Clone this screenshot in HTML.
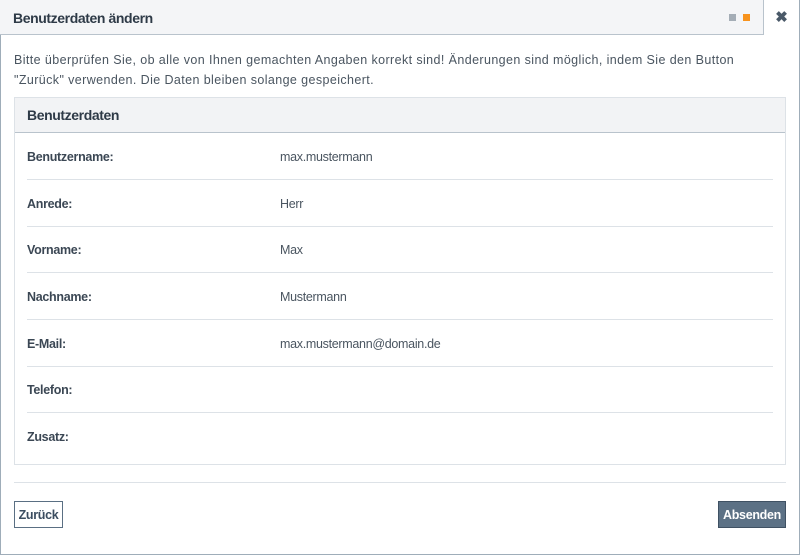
<!DOCTYPE html>
<html><head><meta charset="utf-8"><style>
*{margin:0;padding:0;box-sizing:border-box}
body{width:800px;height:555px;background:#fff;font-family:"Liberation Sans",sans-serif;color:#3b4754;overflow:hidden}
.frame{position:absolute;left:0;top:0;width:800px;height:555px;border:1px solid #9fadb9}
.hdr{position:absolute;left:0;top:0;width:798px;height:35px;background:#f4f5f7;border-bottom:1px solid #b9c3cc}
.hdr h1{position:absolute;left:13px;top:10px;font-size:14px;font-weight:bold;color:#2e3a47;letter-spacing:-0.4px}
.sq{position:absolute;top:14px;width:7px;height:7px}
.close{position:absolute;left:763px;top:0;width:36px;height:35px;border-left:1px solid #b9c3cc;background:#fff;font-size:15px;font-weight:bold;text-align:center;line-height:35px;color:#4a5968}
.intro{position:absolute;left:14px;top:50px;font-size:12.5px;line-height:20px;color:#4a5560;letter-spacing:0.4px;width:790px;white-space:nowrap}
.panel{position:absolute;left:14px;top:97px;width:772px;height:368px;border:1px solid #dde2e7}
.ph{height:35px;background:#f2f3f5;border-bottom:1px solid #b9c3cc;font-weight:bold;font-size:14px;padding:9px 12px;color:#2e3a47;letter-spacing:-0.4px}
.row{position:absolute;left:12px;width:746px;height:47px;border-bottom:1px solid #dde2e7;font-size:12.5px;letter-spacing:-0.3px}
.row b{position:absolute;left:0;top:17px;color:#3b4754}
.row span{position:absolute;left:253px;top:17px;color:#4a5560}
.fl{position:absolute;left:14px;top:482px;width:772px;border-top:1px solid #dde2e7}
.btn{position:absolute;top:501px;height:27px;font-size:12.5px;font-weight:bold;line-height:26px;text-align:center;letter-spacing:-0.3px}
</style></head><body>
<div class="frame"></div>
<div class="hdr"><h1>Benutzerdaten ändern</h1>
<div class="sq" style="left:729px;background:#a4adb6"></div>
<div class="sq" style="left:743px;background:#f7931e"></div>
<div class="close">✖</div></div>
<div class="intro">Bitte überprüfen Sie, ob alle von Ihnen gemachten Angaben korrekt sind! Änderungen sind möglich, indem Sie den Button<br>"Zurück" verwenden. Die Daten bleiben solange gespeichert.</div>
<div class="panel"><div class="ph">Benutzerdaten</div>
<div class="row" style="top:35px"><b>Benutzername:</b><span>max.mustermann</span></div>
<div class="row" style="top:82px"><b>Anrede:</b><span>Herr</span></div>
<div class="row" style="top:128px"><b>Vorname:</b><span>Max</span></div>
<div class="row" style="top:175px"><b>Nachname:</b><span>Mustermann</span></div>
<div class="row" style="top:222px"><b>E-Mail:</b><span>max.mustermann@domain.de</span></div>
<div class="row" style="top:268px"><b>Telefon:</b></div>
<div class="row" style="top:315px;border-bottom:none"><b>Zusatz:</b></div>
</div>
<div class="fl"></div>
<div class="btn" style="left:14px;width:49px;border:1px solid #5a6f83;color:#3b4d60">Zurück</div>
<div class="btn" style="left:718px;width:68px;background:#5c7185;border:1px solid #3f5163;color:#fff">Absenden</div>
</body></html>
